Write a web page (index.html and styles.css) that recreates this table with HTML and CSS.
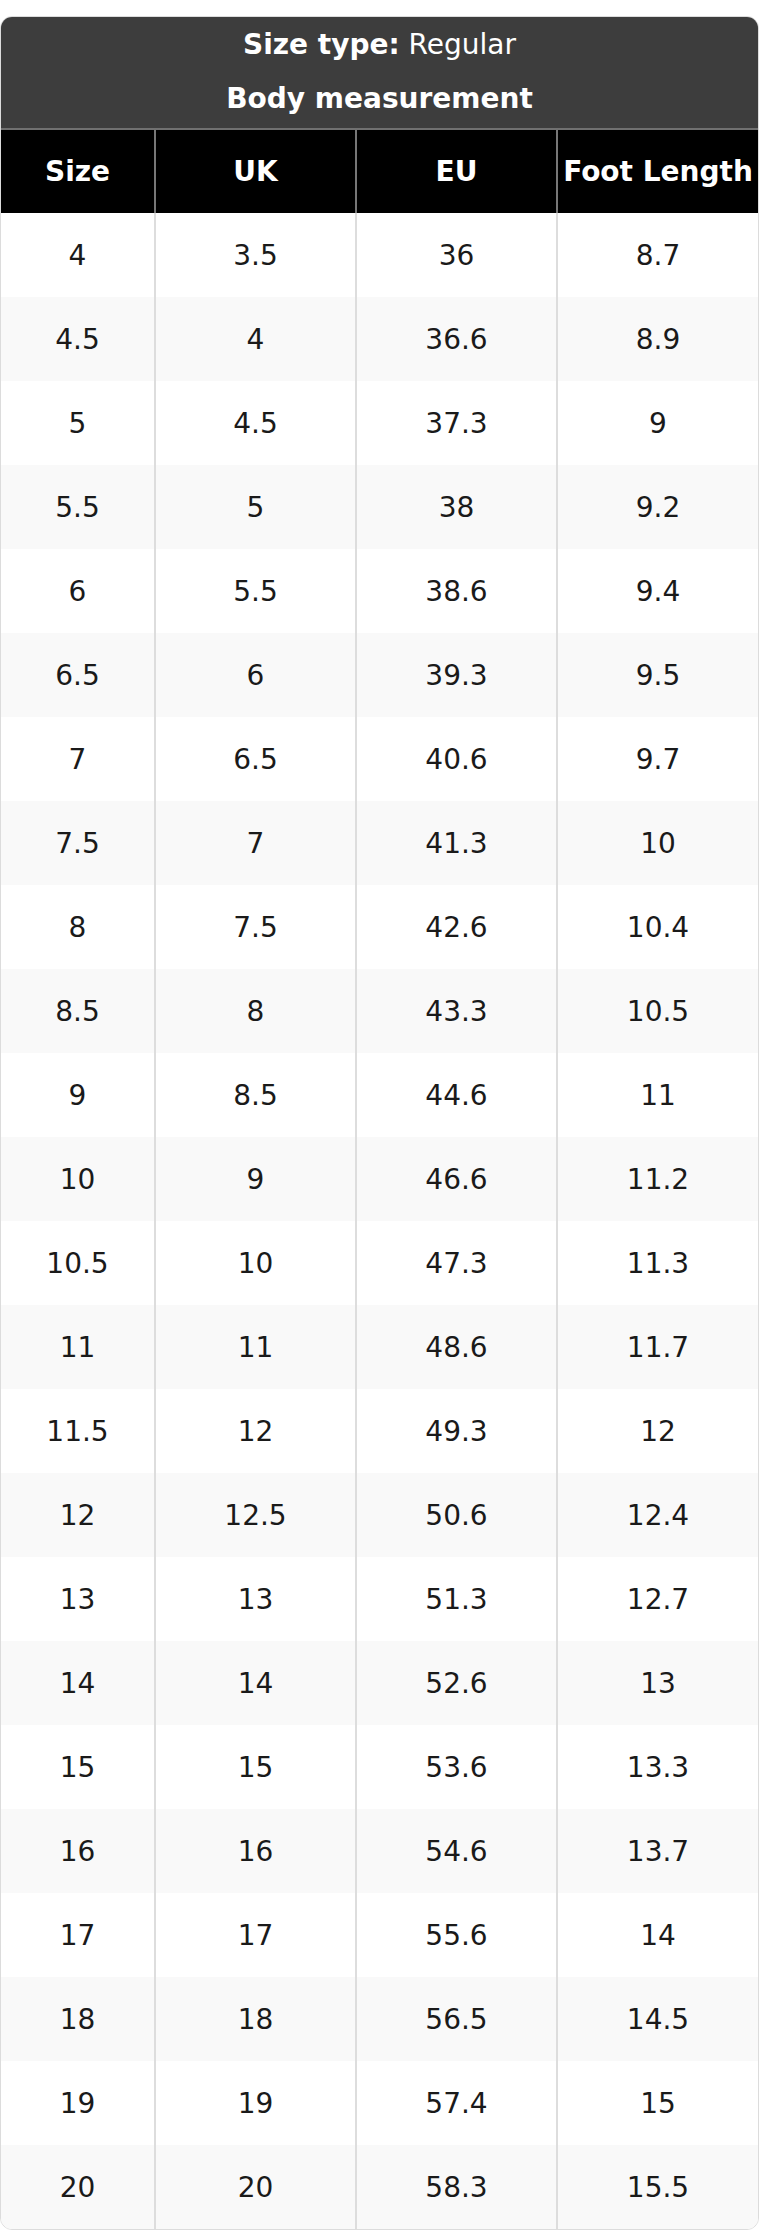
FILE: index.html
```html
<!DOCTYPE html>
<html lang="en">
<head>
<meta charset="utf-8">
<title>Size chart</title>
<link rel="stylesheet" href="styles.css">
</head>
<body>
<div class="page">
  <div class="chart">
    <table class="size-table">
      <colgroup>
        <col class="c1"><col class="c2"><col class="c3"><col class="c4">
      </colgroup>
      <thead>
        <tr>
          <th class="caption" colspan="4">
            <div class="cap-line"><strong>Size type:</strong> Regular</div>
            <div class="cap-line"><strong>Body measurement</strong></div>
          </th>
        </tr>
        <tr class="col-heads">
          <th>Size</th><th>UK</th><th>EU</th><th>Foot Length</th>
        </tr>
      </thead>
      <tbody>
        <tr><td>4</td><td>3.5</td><td>36</td><td>8.7</td></tr>
        <tr><td>4.5</td><td>4</td><td>36.6</td><td>8.9</td></tr>
        <tr><td>5</td><td>4.5</td><td>37.3</td><td>9</td></tr>
        <tr><td>5.5</td><td>5</td><td>38</td><td>9.2</td></tr>
        <tr><td>6</td><td>5.5</td><td>38.6</td><td>9.4</td></tr>
        <tr><td>6.5</td><td>6</td><td>39.3</td><td>9.5</td></tr>
        <tr><td>7</td><td>6.5</td><td>40.6</td><td>9.7</td></tr>
        <tr><td>7.5</td><td>7</td><td>41.3</td><td>10</td></tr>
        <tr><td>8</td><td>7.5</td><td>42.6</td><td>10.4</td></tr>
        <tr><td>8.5</td><td>8</td><td>43.3</td><td>10.5</td></tr>
        <tr><td>9</td><td>8.5</td><td>44.6</td><td>11</td></tr>
        <tr><td>10</td><td>9</td><td>46.6</td><td>11.2</td></tr>
        <tr><td>10.5</td><td>10</td><td>47.3</td><td>11.3</td></tr>
        <tr><td>11</td><td>11</td><td>48.6</td><td>11.7</td></tr>
        <tr><td>11.5</td><td>12</td><td>49.3</td><td>12</td></tr>
        <tr><td>12</td><td>12.5</td><td>50.6</td><td>12.4</td></tr>
        <tr><td>13</td><td>13</td><td>51.3</td><td>12.7</td></tr>
        <tr><td>14</td><td>14</td><td>52.6</td><td>13</td></tr>
        <tr><td>15</td><td>15</td><td>53.6</td><td>13.3</td></tr>
        <tr><td>16</td><td>16</td><td>54.6</td><td>13.7</td></tr>
        <tr><td>17</td><td>17</td><td>55.6</td><td>14</td></tr>
        <tr><td>18</td><td>18</td><td>56.5</td><td>14.5</td></tr>
        <tr><td>19</td><td>19</td><td>57.4</td><td>15</td></tr>
        <tr><td>20</td><td>20</td><td>58.3</td><td>15.5</td></tr>
      </tbody>
    </table>
  </div>
</div>
</body>
</html>
```

FILE: styles.css
```css
html, body {
  margin: 0;
  padding: 0;
  background: #ffffff;
}

.page {
  padding-top: 16px;
  font-family: "DejaVu Sans", "Liberation Sans", sans-serif;
  font-size: 28px;
  color: #1a1a1a;
}

.chart {
  width: 759px;
  box-sizing: border-box;
  border: 1px solid #dcdcdc;
  border-radius: 12px;
  overflow: hidden;
  background: #ffffff;
}

.size-table {
  width: 757px;
  table-layout: fixed;
  border-collapse: separate;
  border-spacing: 0;
}

.c1 { width: 155px; }
.c2 { width: 201px; }
.c3 { width: 201px; }
.c4 { width: 200px; }

.caption {
  background: #3d3d3d;
  color: #ffffff;
  padding: 1px 0 2px;
  border-bottom: 2px solid #707070;
  font-weight: normal;
  text-align: center;
}

.cap-line {
  line-height: 54px;
  height: 54px;
  white-space: nowrap;
}

.cap-line strong {
  font-weight: bold;
}

.col-heads th {
  background: #000000;
  color: #ffffff;
  font-weight: bold;
  height: 83px;
  padding: 1px 0 0;
  line-height: 34px;
  text-align: center;
  white-space: nowrap;
  box-sizing: border-box;
  border-right: 2px solid #777777;
}

.col-heads th:last-child {
  border-right: none;
}

.size-table td {
  height: 84px;
  padding: 2px 0 0;
  line-height: 34px;
  text-align: center;
  box-sizing: border-box;
  border-right: 2px solid #dddddd;
}

.size-table td:last-child {
  border-right: none;
}

.size-table tbody tr:nth-child(even) td {
  background: #f9f9f9;
}
```
